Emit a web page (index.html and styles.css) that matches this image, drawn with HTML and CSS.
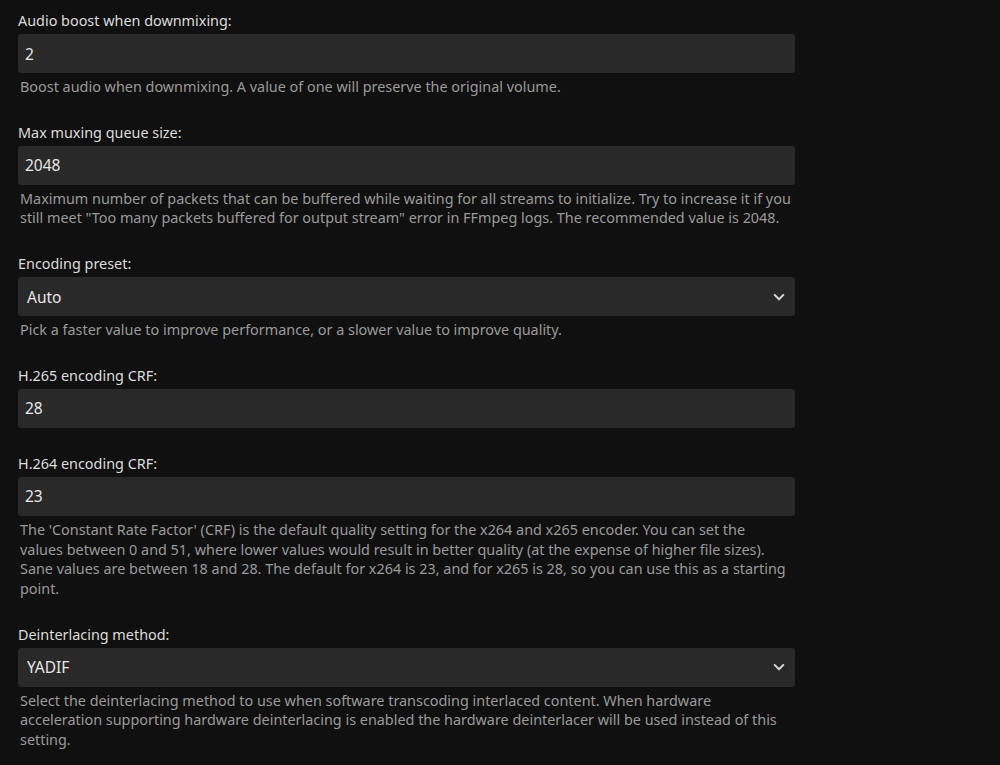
FILE: index.html
```html
<!DOCTYPE html>
<html lang="en">
<head>
    <meta charset="UTF-8">
    <title>Transcoding</title>
    <link rel="stylesheet" href="styles.css">
</head>
<body>
    <div class="settings">
        <div class="field">
            <label class="field-label">Audio boost when downmixing:</label>
            <div class="input">2</div>
            <div class="field-desc">Boost audio when downmixing. A value of one will preserve the original volume.</div>
        </div>

        <div class="field">
            <label class="field-label">Max muxing queue size:</label>
            <div class="input">2048</div>
            <div class="field-desc">Maximum number of packets that can be buffered while waiting for all streams to initialize. Try to increase it if you still meet "Too many packets buffered for output stream" error in FFmpeg logs. The recommended value is 2048.</div>
        </div>

        <div class="field">
            <label class="field-label">Encoding preset:</label>
            <div class="input select">
                <span>Auto</span>
                <svg class="chevron" viewBox="0 0 24 24" width="18" height="18"><path d="M5.5 8.5 12 15l6.5-6.5" fill="none" stroke="currentColor" stroke-width="2.6"/></svg>
            </div>
            <div class="field-desc">Pick a faster value to improve performance, or a slower value to improve quality.</div>
        </div>

        <div class="field">
            <label class="field-label">H.265 encoding CRF:</label>
            <div class="input">28</div>
        </div>

        <div class="field">
            <label class="field-label">H.264 encoding CRF:</label>
            <div class="input">23</div>
            <div class="field-desc narrow">The 'Constant Rate Factor' (CRF) is the default quality setting for the x264 and x265 encoder. You can set the values between 0 and 51, where lower values would result in better quality (at the expense of higher file sizes). Sane values are between 18 and 28. The default for x264 is 23, and for x265 is 28, so you can use this as a starting point.</div>
        </div>

        <div class="field">
            <label class="field-label">Deinterlacing method:</label>
            <div class="input select">
                <span>YADIF</span>
                <svg class="chevron" viewBox="0 0 24 24" width="18" height="18"><path d="M5.5 8.5 12 15l6.5-6.5" fill="none" stroke="currentColor" stroke-width="2.6"/></svg>
            </div>
            <div class="field-desc">Select the deinterlacing method to use when software transcoding interlaced content. When hardware acceleration supporting hardware deinterlacing is enabled the hardware deinterlacer will be used instead of this setting.</div>
        </div>
    </div>
</body>
</html>
```

FILE: styles.css
```css
* {
    margin: 0;
    padding: 0;
    box-sizing: border-box;
}

body {
    background: #101010;
    color: #ddd;
    font-family: "Noto Sans", "Open Sans", sans-serif;
}

.settings {
    width: 777px;
    margin-left: 18px;
    padding-top: 11px;
}

.field {
    margin-bottom: 26px;
}

.field-label {
    display: block;
    font-size: 14.4px;
    line-height: 20px;
    margin-bottom: 3px;
    color: #dcdcdc;
}

.input {
    display: flex;
    align-items: center;
    justify-content: space-between;
    height: 39px;
    padding: 0 7px 0 7px;
    background: #292929;
    border-radius: 3px;
    font-size: 15.5px;
    color: #e6e6e6;
}

.select span {
    padding-left: 2px;
}

.chevron {
    color: #d6d6d6;
}

.field-desc {
    margin-top: 4px;
    padding-left: 2px;
    font-size: 14.4px;
    line-height: 19.7px;
    color: #9a9a9a;
}

.field-desc.narrow {
    padding-right: 6px;
}
```
